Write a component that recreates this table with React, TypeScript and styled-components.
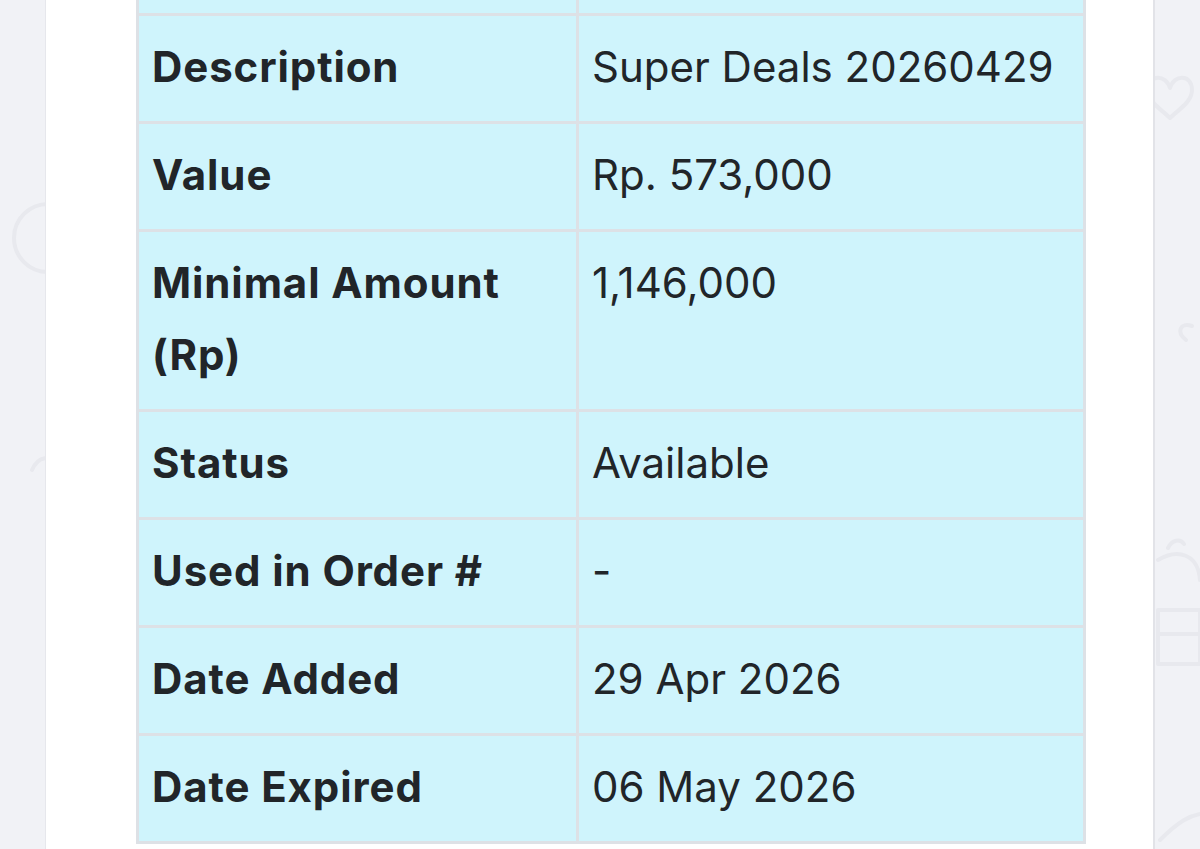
import React from "react";
import styled, { createGlobalStyle } from "styled-components";

const rows: { label: string; value: string }[] = [
  { label: "Description", value: "Super Deals 20260429" },
  { label: "Value", value: "Rp. 573,000" },
  { label: "Minimal Amount (Rp)", value: "1,146,000" },
  { label: "Status", value: "Available" },
  { label: "Used in Order #", value: "-" },
  { label: "Date Added", value: "29 Apr 2026" },
  { label: "Date Expired", value: "06 May 2026" },
];

export default function App() {
  return (
    <>
      <GlobalStyle />
      <Page>
        <Doodles width="1200" height="849" viewBox="0 0 1200 849">
          <circle cx="48" cy="238" r="34" />
          <path d="M32 470c6-14 20-16 24-4" />
          <path d="M1170 88c4-14 22-14 22 2 0 12-14 20-22 28-8-8-22-16-22-28 0-16 18-16 22-2z" />
          <path d="M1186 340c-10-8-6-18 6-14" />
          <path d="M1168 548c4-8 12-10 16-4M1158 560c20-12 40-6 42 20M1158 610h42v24h-42zM1158 634h42v30h-42z" />
          <path d="M1160 840c20-20 30-24 40-26" />
        </Doodles>
        <Card>
          <DetailTable>
            <colgroup>
              <col style={{ width: 440 }} />
              <col />
            </colgroup>
            <tbody>
              {/* tail of the row above, scrolled out of view */}
              <tr>
                <SliverCell />
                <SliverCell />
              </tr>
              {rows.map((row) => (
                <tr key={row.label}>
                  <LabelCell>{row.label}</LabelCell>
                  <ValueCell>{row.value}</ValueCell>
                </tr>
              ))}
            </tbody>
          </DetailTable>
        </Card>
      </Page>
    </>
  );
}

const GlobalStyle = createGlobalStyle`
  html, body {
    margin: 0;
    padding: 0;
    height: 849px;
    overflow: hidden;
    background: #f1f2f6;
  }
  body {
    font-family: Inter, "Liberation Sans", sans-serif;
    color: #212529;
  }
`;

const Page = styled.main`
  position: relative;
  height: 849px;
  padding: 0 45px;
  overflow: hidden;
`;

const Doodles = styled.svg`
  position: absolute;
  inset: 0;
  fill: none;
  stroke: #e8e9ee;
  stroke-width: 4;
  stroke-linecap: round;
  stroke-linejoin: round;
`;

const Card = styled.section`
  position: relative;
  min-height: 870px;
  margin-top: -3px;
  padding: 0 70px 0 90px;
  background: #ffffff;
  border-left: 1px solid #e6e7ec;
  border-right: 2px solid #e2e3e8;
`;

const DetailTable = styled.table`
  width: 950px;
  border-collapse: collapse;
  table-layout: fixed;
  background: #cff4fc;
  border: 3px solid #dde1e6;
`;

const Cell = styled.td`
  padding: 15px 13px 18px;
  border: 3px solid #dde1e6;
  font-size: 42px;
  line-height: 72px;
  vertical-align: top;
  color: #212529;
`;

const SliverCell = styled(Cell)`
  height: 13px;
  padding: 0;
  line-height: 13px;
`;

const LabelCell = styled(Cell)`
  font-weight: 700;
  letter-spacing: 0.9px;
`;

const ValueCell = styled(Cell)`
  font-weight: 400;
`;
